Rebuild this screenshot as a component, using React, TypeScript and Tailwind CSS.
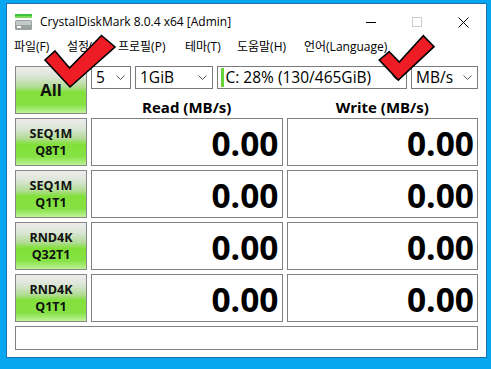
import React from "react";

const F = "font-['Open_Sans','Noto_Sans_CJK_KR',sans-serif]";

const Chevron = () => (
  <svg width="9" height="5" viewBox="0 0 9 5" className="shrink-0">
    <path d="M0.5 0.5 L4.5 4.5 L8.5 0.5" fill="none" stroke="#5a5a5a" strokeWidth="1" />
  </svg>
);

function Combo({ children, className = "" }: { children: React.ReactNode; className?: string }) {
  return (
    <div className={`h-[23px] border border-[#7a7a7a] bg-white flex items-center justify-between pl-[4px] pr-[5px] ${className}`}>
      {children}
      <Chevron />
    </div>
  );
}

const GREEN =
  "bg-[linear-gradient(to_bottom,#ececec_0%,#dde6d8_20%,#b4dc98_42%,#82e03a_55%,#86e244_82%,#bff29a_100%)]";

function Label({ a, b }: { a: string; b: string }) {
  return (
    <div className={`w-[72px] h-[48px] border border-[#888888] ${GREEN} flex flex-col items-center justify-center text-[12.5px] font-bold leading-[17px] text-[#111]`}>
      <span>{a}</span>
      <span>{b}</span>
    </div>
  );
}

function Value() {
  return (
    <div className="h-[48px] border border-[#808080] bg-white flex items-center justify-end pr-[3px] pt-[3px]">
      <span className="text-[33.5px] font-bold leading-none text-black">0.00</span>
    </div>
  );
}

function Row({ a, b }: { a: string; b: string }) {
  return (
    <div className="grid grid-cols-[72px_1fr_1fr] gap-[4px]">
      <Label a={a} b={b} />
      <Value />
      <Value />
    </div>
  );
}

const MENU: [string, string][] = [
  ["파일(F)", "w-[53px]"],
  ["설정(S)", "w-[51px]"],
  ["프로필(P)", "w-[67px]"],
  ["테마(T)", "w-[52px]"],
  ["도움말(H)", "w-[67px]"],
  ["언어(Language)", "w-[100px]"],
];

export default function App() {
  return (
    <div className={`w-[491px] h-[369px] bg-[#06a6f1] pt-[3px] pl-[6px] pr-[4px] pb-[11px] ${F} relative overflow-hidden`}>
      <div className="w-full h-full border border-[#1c70b0] bg-white flex flex-col">
        {/* Title bar */}
        <div className="h-[33px] pt-[3px] flex items-center shrink-0">
          <div className="ml-[8px] w-[17px] h-[16px] flex flex-col">
            <svg width="17" height="16" viewBox="0 0 17 16">
              <rect x="0" y="0" width="17" height="2" fill="#3cc43c" />
              <rect x="0" y="2" width="17" height="2" fill="#7ad85a" />
              <rect x="0" y="6" width="17" height="10" rx="1.5" fill="#9aa3a0" />
              <rect x="1" y="7" width="15" height="4" fill="#c3c9c6" />
              <rect x="2" y="12" width="4" height="2" fill="#ffffff" />
            </svg>
          </div>
          <span className="ml-[8px] text-[12px] text-black">CrystalDiskMark 8.0.4 x64 [Admin]</span>
          <div className="ml-auto flex h-full items-center">
            <div className="w-[46px] flex justify-center">
              <div className="w-[10px] h-[1px] bg-black" />
            </div>
            <div className="w-[46px] flex justify-center">
              <div className="w-[10px] h-[10px] border border-[#cccccc]" />
            </div>
            <div className="w-[46px] flex justify-center">
              <svg width="11" height="11" viewBox="0 0 11 11">
                <path d="M0.5 0.5 L10.5 10.5 M10.5 0.5 L0.5 10.5" stroke="#000" strokeWidth="1" />
              </svg>
            </div>
          </div>
        </div>
        {/* Menu bar */}
        <div className="h-[20px] flex items-center text-[12px] text-black shrink-0">
          {MENU.map(([m, w]) => (
            <span key={m} className={`${w} pl-[7px] leading-[20px] whitespace-nowrap`}>
              {m}
            </span>
          ))}
        </div>
        {/* Content */}
        <div className="flex-1 px-[8px] pt-[9px] flex flex-col gap-[4px]">
          <div className="flex gap-[4px] h-[48px]">
            <div className={`w-[72px] h-[48px] border border-[#888888] ${GREEN} flex items-center justify-center pt-[1px]`}>
              <span className="text-[16.5px] font-bold text-[#111]">All</span>
            </div>
            <div className="flex-1 flex flex-col">
              <div className="flex gap-[4px] text-[15.5px] text-black">
                <Combo className="w-[40px]">
                  <span>5</span>
                </Combo>
                <Combo className="w-[78px]">
                  <span>1GiB</span>
                </Combo>
                <div className="flex-1 h-[23px] border border-[#7a7a7a] bg-white flex items-center pr-[5px]">
                  <div className="ml-[3px] w-[2.5px] h-[19px] bg-[#66d43a]" />
                  <span className="ml-[2px]">C: 28% (130/465GiB)</span>
                  <div className="ml-auto">
                    <Chevron />
                  </div>
                </div>
                <Combo className="w-[67px]">
                  <span>MB/s</span>
                </Combo>
              </div>
              <div className="flex-1 grid grid-cols-2 gap-[4px] items-end">
                <div className="text-center text-[15px] font-bold leading-[14px] text-black">Read (MB/s)</div>
                <div className="text-center text-[15px] font-bold leading-[14px] text-black">Write (MB/s)</div>
              </div>
            </div>
          </div>
          <Row a="SEQ1M" b="Q8T1" />
          <Row a="SEQ1M" b="Q1T1" />
          <Row a="RND4K" b="Q32T1" />
          <Row a="RND4K" b="Q1T1" />
          <div className="h-[24px] border border-[#808080] bg-white" />
        </div>
      </div>
      {/* Red check marks overlay */}
      <svg className="absolute left-0 top-0 pointer-events-none" width="491" height="369" viewBox="0 0 491 369">
        <polygon
          points="55,51 69.5,68 101.5,35.5 115,47 70,87 45,60"
          fill="#ee1c25"
          stroke="#000"
          strokeWidth="1.6"
          strokeLinejoin="miter"
        />
        <polygon
          points="389.3,51.7 399.3,62 423.3,35.7 434,46.7 398.3,80 379.3,60"
          fill="#ee1c25"
          stroke="#000"
          strokeWidth="1.6"
          strokeLinejoin="miter"
        />
      </svg>
    </div>
  );
}
